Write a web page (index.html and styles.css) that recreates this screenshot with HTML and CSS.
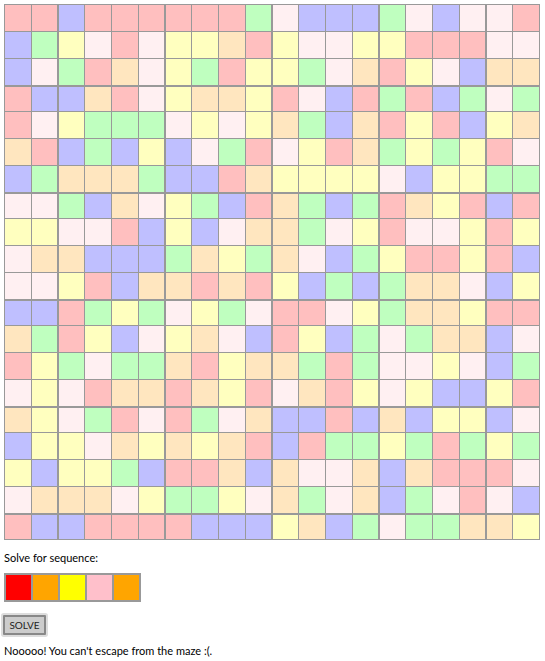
FILE: index.html
```html
<!DOCTYPE html>
<html lang="en">
<head>
    <meta charset="UTF-8">
    <title>Maze</title>
    <link rel="stylesheet" href="styles.css">
</head>
<body>

<!-- the maze, filled in by maze.js -->
<table class="maze" id="maze"></table>

<p class="label">Solve for sequence:</p>

<table class="sequence">
    <tr>
        <td class="red"></td>
        <td class="orange"></td>
        <td class="yellow"></td>
        <td class="pink"></td>
        <td class="orange"></td>
    </tr>
</table>

<div class="solve-wrap">
    <button class="solve">SOLVE</button>
</div>

<p class="message">Nooooo! You can't escape from the maze :(.</p>

<script src="maze.js"></script>
</body>
</html>
```

FILE: styles.css
```css
body {
    font-family: Lato, sans-serif;
    font-size: 11px;
    color: #000;
    background-color: #fff;
    margin: 0;
    padding: 4px 5px 0 4px;
}
table {
    border-collapse: collapse;
}
.maze {
    width: 536px;
    table-layout: fixed;
}
.maze td {
    box-sizing: border-box;
    height: 27px;
    padding: 0;
    border: 1px solid #999;
}
.maze tr.thick-bottom + tr td {
    height: 26px;
}
.maze td.thick-right {
    border-right: 2px solid #999;
}
.maze tr.thick-bottom td {
    border-bottom: 2px solid #999;
}
.maze .r { background-color: #ffbfbf; }
.maze .o { background-color: #ffe6bf; }
.maze .y { background-color: #ffffbf; }
.maze .p { background-color: #fff0f2; }
.maze .g { background-color: #bfffbf; }
.maze .b { background-color: #bfbfff; }
.label {
    margin: 11px 0 8px;
    line-height: 14px;
}
.sequence td {
    width: 25px;
    height: 25px;
    padding: 0;
    border: 2px solid #999;
}
.red { background-color: #f00; }
.orange { background-color: #ffa500; }
.yellow { background-color: #ff0; }
.pink { background-color: #ffc0cb; }
.solve-wrap {
    margin: 13px 0 0 -1px;
    display: flex;
}
.solve {
    width: 43px;
    height: 20px;
    padding: 0;
    font-family: Lato, sans-serif;
    font-size: 10px;
    color: #222;
    background-color: #ccc;
    border: 2px solid #888;
    border-radius: 1px;
    box-shadow: 0 0 0 2px #ddd;
}
.message {
    margin: 9px 0 0;
    line-height: 14px;
}
```

FILE: maze.js
```js
var rows = [
    "rrbrrrrrrgpbbbgpbppr",
    "bgyprpyyoryppyyrrrpp",
    "bpgropygryygporypboo",
    "rbborpyooyrpbrgrbgpg",
    "rpygggpypyogboryrbyo",
    "orbgbybpgrpyrogygyrp",
    "bgooogbbroyyyypbyygg",
    "ppgbopygbrogbgroyrbr",
    "yypprbybpoogpyrppyry",
    "poobbbgoygopbgyrryrb",
    "ppyrboororybgbgoopby",
    "bbrgygpygprrpygooyrr",
    "ogrybpyopbrybgpgoobp",
    "rygpggoryoogrgppypbg",
    "pyprooroyrporypybbyr",
    "oypgrprgpobbrbobyybp",
    "byypoyoyorbrggygrgyg",
    "ybyygbrroboppoborrrp",
    "pooopyggypogpobgprpb",
    "rbbrrrrbbbyobgpggooy"
];

var maze = document.getElementById("maze");

for (var i = 0; i < rows.length; i++) {
    var tr = document.createElement("tr");
    // heavier line under every fourth row, starting at row 3
    if (i % 4 == 2) {
        tr.className = "thick-bottom";
    }
    for (var j = 0; j < rows[i].length; j++) {
        var td = document.createElement("td");
        td.className = rows[i][j];
        if (j % 4 == 1 && j < 19) {
            td.className += " thick-right";
        }
        tr.appendChild(td);
    }
    maze.appendChild(tr);
}
```
